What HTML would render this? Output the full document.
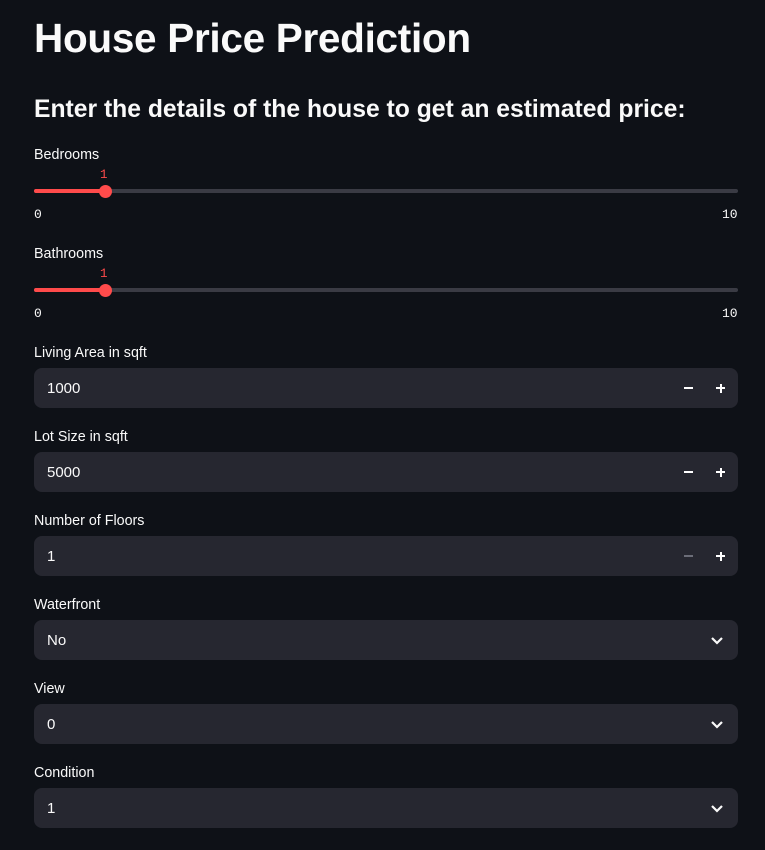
<!DOCTYPE html>
<html><head><style>
body{margin:0;background:#0e1117;width:765px;height:850px;overflow:hidden;font-family:"Liberation Sans",sans-serif;color:#fafafa;position:relative}
h1{position:absolute;left:34px;top:15px;margin:0;font-size:40.5px;font-weight:700;letter-spacing:-0.3px}
h2{position:absolute;left:34px;top:96px;margin:0;font-size:24.7px;font-weight:700}
.lbl{position:absolute;left:34px;font-size:14.3px;color:#fafafa}
.track{position:absolute;left:34px;width:704px;height:4px;background:#3a3b44;border-radius:2px}
.fill{position:absolute;left:0;top:0;width:71px;height:4px;background:#ff4b4b;border-radius:2px}
.thumb{position:absolute;left:65px;top:-4.5px;width:13px;height:13px;border-radius:50%;background:#ff4b4b}
.val{position:absolute;font-family:"Liberation Mono",monospace;font-size:12.5px;color:#ff4b4b}
.tick{position:absolute;font-family:"Liberation Mono",monospace;font-size:13px;color:#fafafa}
.box{position:absolute;left:34px;width:704px;height:40px;background:#262730;border-radius:8px}
.box span.t{position:absolute;left:13px;top:12px;font-size:15px}
.minus{position:absolute;left:650px;top:19px;width:9px;height:2px;background:#fff}
.plus{position:absolute;left:682px;top:19px;width:9px;height:2px;background:#fff}
.plus:after{content:"";position:absolute;left:3.5px;top:-3.5px;width:2px;height:9px;background:#fff}
.chev{position:absolute;left:676px;top:13px}
</style></head><body>
<h1>House Price Prediction</h1>
<h2>Enter the details of the house to get an estimated price:</h2>

<div class="lbl" style="top:147px">Bedrooms</div>
<div class="val" style="left:100px;top:168px">1</div>
<div class="track" style="top:189px"><div class="fill"></div><div class="thumb"></div></div>
<div class="tick" style="left:34px;top:207px">0</div>
<div class="tick" style="left:722px;top:207px">10</div>

<div class="lbl" style="top:246px">Bathrooms</div>
<div class="val" style="left:100px;top:267px">1</div>
<div class="track" style="top:288px"><div class="fill"></div><div class="thumb"></div></div>
<div class="tick" style="left:34px;top:306px">0</div>
<div class="tick" style="left:722px;top:306px">10</div>

<div class="lbl" style="top:345px">Living Area in sqft</div>
<div class="box" style="top:368px"><span class="t">1000</span><div class="minus"></div><div class="plus"></div></div>

<div class="lbl" style="top:429px">Lot Size in sqft</div>
<div class="box" style="top:452px"><span class="t">5000</span><div class="minus"></div><div class="plus"></div></div>

<div class="lbl" style="top:513px">Number of Floors</div>
<div class="box" style="top:536px"><span class="t">1</span><div class="minus" style="background:#6b6d78"></div><div class="plus"></div></div>

<div class="lbl" style="top:597px">Waterfront</div>
<div class="box" style="top:620px"><span class="t">No</span><svg class="chev" width="14" height="14" viewBox="0 0 14 14"><path d="M2 5l5 5 5-5" fill="none" stroke="#fafafa" stroke-width="2.2"/></svg></div>

<div class="lbl" style="top:681px">View</div>
<div class="box" style="top:704px"><span class="t">0</span><svg class="chev" width="14" height="14" viewBox="0 0 14 14"><path d="M2 5l5 5 5-5" fill="none" stroke="#fafafa" stroke-width="2.2"/></svg></div>

<div class="lbl" style="top:765px">Condition</div>
<div class="box" style="top:788px"><span class="t">1</span><svg class="chev" width="14" height="14" viewBox="0 0 14 14"><path d="M2 5l5 5 5-5" fill="none" stroke="#fafafa" stroke-width="2.2"/></svg></div>
</body></html>
